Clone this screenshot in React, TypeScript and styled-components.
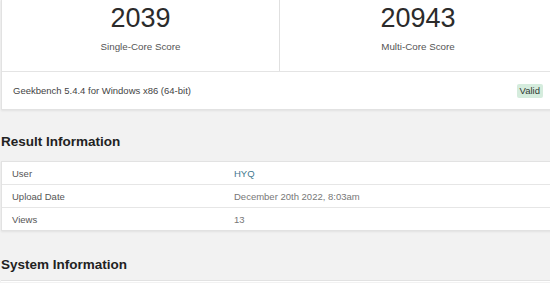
import styled, { createGlobalStyle } from "styled-components";

const GlobalStyle = createGlobalStyle`
  html, body {
    margin: 0;
    padding: 0;
    background: #f2f2f2;
    overflow: hidden;
    font-family: "Liberation Sans", Arial, sans-serif;
  }
`;

const rows = [
  { label: "User", value: "HYQ", link: true },
  { label: "Upload Date", value: "December 20th 2022, 8:03am" },
  { label: "Views", value: "13" },
];

const App = () => {
  return (
    <Page>
      <GlobalStyle />
      <ScoreCard>
        <Scores>
          <ScoreCol>
            <ScoreValue>2039</ScoreValue>
            <ScoreLabel>Single-Core Score</ScoreLabel>
          </ScoreCol>
          <ScoreCol divider>
            <ScoreValue>20943</ScoreValue>
            <ScoreLabel>Multi-Core Score</ScoreLabel>
          </ScoreCol>
        </Scores>
        <InfoRow>
          <span>Geekbench 5.4.4 for Windows x86 (64-bit)</span>
          <Badge>Valid</Badge>
        </InfoRow>
      </ScoreCard>

      <Heading>Result Information</Heading>
      <Table>
        {rows.map((row) => (
          <Row key={row.label}>
            <Label>{row.label}</Label>
            <Value link={row.link}>{row.value}</Value>
          </Row>
        ))}
      </Table>

      <Heading last>System Information</Heading>
      <NextCard />
    </Page>
  );
};

export default App;

const Page = styled.div`
  width: 556px;
  padding-left: 1px;
`;

const ScoreCard = styled.div`
  background: #fff;
  border: 1px solid #e2e2e2;
  border-top: none;
  box-shadow: 0 1px 2px rgba(0, 0, 0, 0.07);
`;

const Scores = styled.div`
  display: grid;
  grid-template-columns: 277px 1fr;
  height: 71px;
  border-bottom: 1px solid #e4e4e4;
`;

const ScoreCol = styled.div<{ divider?: boolean }>`
  display: flex;
  flex-direction: column;
  align-items: center;
  border-left: ${(p) => (p.divider ? "1px solid #e0e0e0" : "none")};
`;

const ScoreValue = styled.div`
  font-size: 27px;
  line-height: 32px;
  margin-top: 2px;
  color: #2b2b2b;
`;

const ScoreLabel = styled.div`
  font-size: 9.8px;
  line-height: 12px;
  margin-top: 7px;
  color: #555;
`;

const InfoRow = styled.div`
  display: flex;
  align-items: center;
  justify-content: space-between;
  height: 37px;
  padding: 0 13px 0 11px;
  font-size: 9.5px;
  color: #444;
`;

const Badge = styled.span`
  background: #d5ecdd;
  color: #2f3a33;
  font-size: 9.5px;
  line-height: 12px;
  padding: 1px 3px;
  border-radius: 2px;
  margin-top: 1px;
`;

const Heading = styled.h2<{ last?: boolean }>`
  margin: ${(p) => (p.last ? "25px 0 6px" : "23px 0 10px")};
  font-size: 13.5px;
  line-height: 18px;
  font-weight: bold;
  color: #222;
`;

const Table = styled.div`
  background: #fff;
  border: 1px solid #e2e2e2;
  box-shadow: 0 1px 2px rgba(0, 0, 0, 0.07);
`;

const Row = styled.div`
  display: grid;
  grid-template-columns: 222px 1fr;
  height: 22px;
  align-items: center;
  font-size: 9.5px;

  & + & {
    border-top: 1px solid #e6e6e6;
  }
`;

const Label = styled.span`
  padding-left: 10px;
  color: #555;
`;

const Value = styled.span<{ link?: boolean }>`
  padding-left: 10px;
  color: ${(p) => (p.link ? "#44788f" : "#777")};
`;

const NextCard = styled.div`
  height: 1px;
  background: #fff;
  border-top: 1px solid #e2e2e2;
`;
